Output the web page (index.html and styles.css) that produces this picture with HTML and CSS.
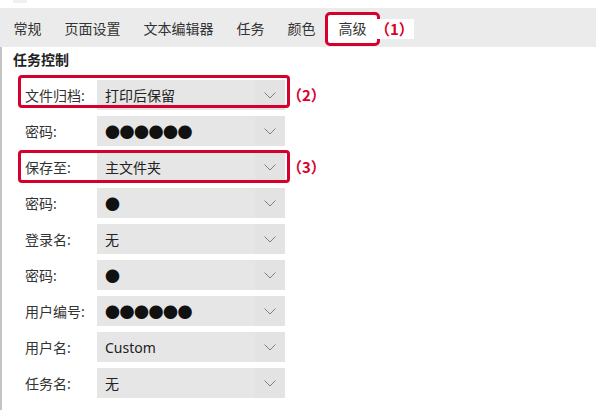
FILE: index.html
```html
<!DOCTYPE html>
<html lang="zh">
<head>
  <meta charset="UTF-8">
  <title>高级</title>
  <link rel="stylesheet" href="styles.css">
</head>
<body>
  <div class="tira"><span class="marca"></span></div>

  <div class="pestanas">
    <span class="pestana">常规</span>
    <span class="pestana">页面设置</span>
    <span class="pestana">文本编辑器</span>
    <span class="pestana">任务</span>
    <span class="pestana">颜色</span>
    <span class="pestana activa">高级</span>
    <span class="nota nota-tab">（1）</span>
  </div>

  <div class="contenido">
    <h2 class="titulo">任务控制</h2>

    <div class="filas">
      <div class="fila marcada arriba">
        <label>文件归档:</label>
        <div class="campo"><span class="valor">打印后保留</span><span class="flecha"><svg width="12" height="7" viewBox="0 0 12 7"><polyline points="0.5,0.5 6,6 11.5,0.5" /></svg></span></div>
        <span class="nota">（2）</span>
      </div>
      <div class="fila">
        <label>密码:</label>
        <div class="campo"><span class="valor puntos">●●●●●●</span><span class="flecha"><svg width="12" height="7" viewBox="0 0 12 7"><polyline points="0.5,0.5 6,6 11.5,0.5" /></svg></span></div>
      </div>
      <div class="fila marcada">
        <label>保存至:</label>
        <div class="campo"><span class="valor">主文件夹</span><span class="flecha"><svg width="12" height="7" viewBox="0 0 12 7"><polyline points="0.5,0.5 6,6 11.5,0.5" /></svg></span></div>
        <span class="nota">（3）</span>
      </div>
      <div class="fila">
        <label>密码:</label>
        <div class="campo"><span class="valor puntos">●</span><span class="flecha"><svg width="12" height="7" viewBox="0 0 12 7"><polyline points="0.5,0.5 6,6 11.5,0.5" /></svg></span></div>
      </div>
      <div class="fila">
        <label>登录名:</label>
        <div class="campo"><span class="valor">无</span><span class="flecha"><svg width="12" height="7" viewBox="0 0 12 7"><polyline points="0.5,0.5 6,6 11.5,0.5" /></svg></span></div>
      </div>
      <div class="fila">
        <label>密码:</label>
        <div class="campo"><span class="valor puntos">●</span><span class="flecha"><svg width="12" height="7" viewBox="0 0 12 7"><polyline points="0.5,0.5 6,6 11.5,0.5" /></svg></span></div>
      </div>
      <div class="fila">
        <label>用户编号:</label>
        <div class="campo"><span class="valor puntos">●●●●●●</span><span class="flecha"><svg width="12" height="7" viewBox="0 0 12 7"><polyline points="0.5,0.5 6,6 11.5,0.5" /></svg></span></div>
      </div>
      <div class="fila">
        <label>用户名:</label>
        <div class="campo"><span class="valor">Custom</span><span class="flecha"><svg width="12" height="7" viewBox="0 0 12 7"><polyline points="0.5,0.5 6,6 11.5,0.5" /></svg></span></div>
      </div>
      <div class="fila">
        <label>任务名:</label>
        <div class="campo"><span class="valor">无</span><span class="flecha"><svg width="12" height="7" viewBox="0 0 12 7"><polyline points="0.5,0.5 6,6 11.5,0.5" /></svg></span></div>
      </div>
    </div>
  </div>
</body>
</html>
```

FILE: styles.css
```css
body {
  margin: 0;
  font-family: "Noto Sans", "Noto Sans CJK SC", sans-serif;
  font-size: 14px;
  color: #333;
  background: #fff;
  overflow: hidden;
}

.tira {
  height: 8px;
  padding-left: 13px;
}

.marca {
  display: block;
  width: 14px;
  height: 3px;
  background: #f0f0f0;
}

.pestanas {
  position: relative;
  z-index: 0;
  display: flex;
  align-items: center;
  height: 39px;
  padding: 3px 0 0 2px;
  box-sizing: border-box;
  background: #ebebeb;
}

.pestana {
  padding: 0 11.5px;
  line-height: 20px;
  color: #333;
}

.activa {
  position: relative;
}

.activa::before {
  content: "";
  position: absolute;
  left: -2px;
  right: -2px;
  top: -7px;
  bottom: -7px;
  background: #fff;
  border: 3px solid #d6002c;
  border-radius: 5px;
  z-index: -1;
}

.nota {
  font-family: "Noto Sans CJK SC", sans-serif;
  font-weight: bold;
  font-size: 15px;
  line-height: 20px;
  color: #d6002c;
}

.nota-tab {
  background: #fff;
  margin-left: -3px;
  padding-right: 0;
}

.contenido {
  border-left: 2px solid #c4c4c4;
  padding: 3px 0 0 11px;
  height: 360px;
}

.titulo {
  margin: 0 0 10px;
  font-size: 14px;
  font-weight: bold;
  line-height: 20px;
  color: #222;
}

.filas {
  display: flex;
  flex-direction: column;
  gap: 6px;
}

.fila {
  display: flex;
  align-items: center;
  height: 30px;
  padding-left: 12px;
  position: relative;
}

.fila label {
  width: 72px;
  color: #333;
}

.campo {
  display: flex;
  align-items: center;
  width: 188px;
  height: 30px;
  background: #e6e6e6;
}

.valor {
  flex: 1;
  padding-left: 8px;
  color: #222;
}

.puntos {
  font-size: 15px;
  letter-spacing: -0.5px;
  color: #111;
}

.flecha {
  display: flex;
  align-items: center;
  justify-content: center;
  width: 30px;
  height: 30px;
  background: #e3e3e3;
}

.flecha polyline {
  fill: none;
  stroke: #808080;
  stroke-width: 1;
}

.fila .nota {
  margin-left: 2px;
}

.marcada::before {
  content: "";
  position: absolute;
  left: 5px;
  width: 266px;
  top: -2px;
  height: 27px;
  border: 3px solid #d6002c;
  border-radius: 4px;
}

.arriba::before {
  top: -5px;
}
```
